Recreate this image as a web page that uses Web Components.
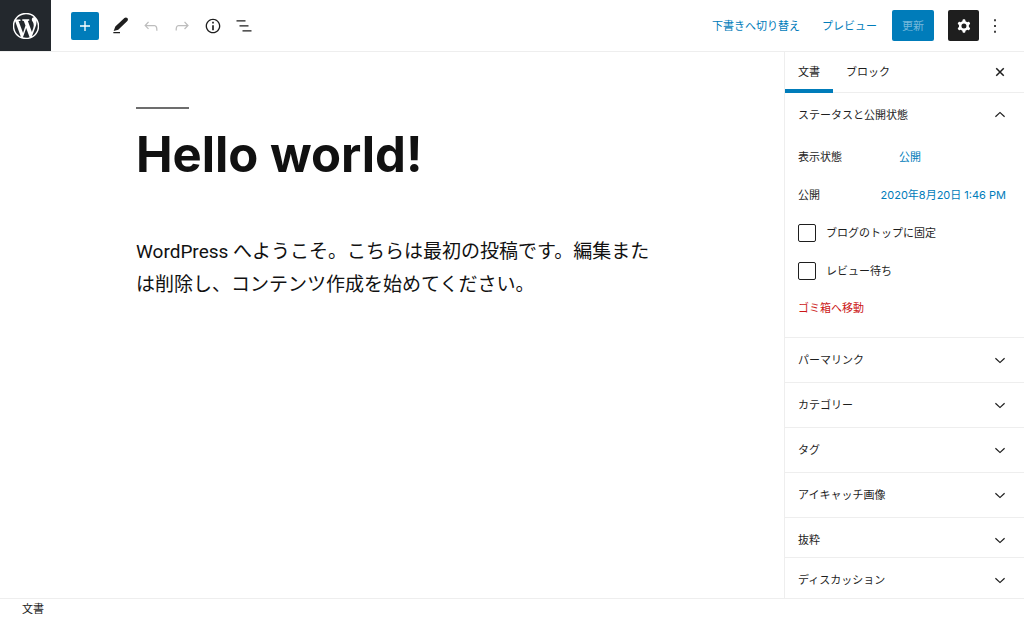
<!DOCTYPE html>
<html lang="ja">
<head>
<meta charset="utf-8">
<meta name="viewport" content="width=device-width, initial-scale=1">
<title>投稿の編集</title>
<style>
  html, body { margin: 0; height: 100%; }
  body {
    font: 11px/16px Inter, "Noto Sans CJK JP", sans-serif;
    color: #1e1e1e;
    background: #fff;
    --blue: #007cba;
    --line: #eee;
  }
</style>
</head>
<body>
<block-editor>
  <editor-header slot="header"></editor-header>
  <post-content slot="content">
    <span slot="title">Hello world!</span>
    <span slot="body">WordPress へようこそ。こちらは最初の投稿です。編集または削除し、コンテンツ作成を始めてください。</span>
  </post-content>
  <settings-sidebar slot="sidebar">
    <settings-panel label="ステータスと公開状態" open>
      <status-form></status-form>
    </settings-panel>
    <settings-panel label="パーマリンク"></settings-panel>
    <settings-panel label="カテゴリー"></settings-panel>
    <settings-panel label="タグ"></settings-panel>
    <settings-panel label="アイキャッチ画像"></settings-panel>
    <settings-panel label="抜粋" compact></settings-panel>
    <settings-panel label="ディスカッション" compact></settings-panel>
  </settings-sidebar>
  <span slot="footer">文書</span>
</block-editor>

<script>
const RESET = `
  *, *::before, *::after { box-sizing: border-box; }
  button { font: inherit; color: inherit; background: none; border: 0; padding: 0; margin: 0; cursor: pointer; }
  a { color: inherit; text-decoration: none; }
`;

function define(name, html, setup) {
  const template = document.createElement('template');
  template.innerHTML = html;
  customElements.define(name, class extends HTMLElement {
    connectedCallback() {
      if (this.shadowRoot) return;
      this.attachShadow({ mode: 'open' }).append(template.content.cloneNode(true));
      if (setup) setup(this, this.shadowRoot);
    }
  });
}

const ICONS = {
  plus: '<path d="M18 11.2h-5.2V6h-1.6v5.2H6v1.6h5.2V18h1.6v-5.2H18z"/>',
  edit: '<path d="M20.8 2.400c-1-1-2.500-1-3.500 0L6.400 12.700l-2 5.200 5.500-1.500L20.800 5.900c1-1 1-2.500 0-3.500zM4 20.800h8v-1.600H4v1.600z"/>',
  undo: '<path d="M18.3 11.7c-.6-.6-1.4-.9-2.3-.9H6.7l2.9-3.3-1.1-1-4.5 5L8.5 16l1-1-2.7-2.7H16c.5 0 .9.2 1.3.5 1 1 1 3.4 1 4.500v.3h1.5v-.2c0-1.500 0-4.300-1.500-5.700z"/>',
  redo: '<path d="M15.600 6.500l-1.100 1 2.900 3.300H8c-.9 0-1.700.3-2.300.9-1.400 1.500-1.400 4.200-1.400 5.600v.2h1.500v-.3c0-1.100 0-3.500 1-4.500.3-.3.7-.5 1.300-.5h9.200L14.500 15l1.100 1.100 4.600-4.600-4.600-5z"/>',
  info: '<path d="M12 3.200c-4.800 0-8.800 3.900-8.800 8.800 0 4.800 3.900 8.800 8.800 8.800 4.800 0 8.800-3.900 8.800-8.800 0-4.800-4-8.800-8.800-8.800zm0 16c-4 0-7.200-3.300-7.200-7.200C4.800 8 8 4.800 12 4.800s7.200 3.300 7.200 7.200c0 4-3.200 7.200-7.200 7.200zM11 17h2v-6h-2v6zm0-8h2V7h-2v2z"/>',
  outline: '<path d="M13.800 5.200H3v1.500h10.800V5.200zm-3.600 12v1.500H21v-1.500H10.200zm7.200-6H6.600v1.500h10.800v-1.500z"/>',
  cog: '<path fill-rule="evenodd" d="M10.289 4.836A1 1 0 0111.275 4h1.306a1 1 0 01.987.836l.244 1.466c.787.26 1.503.679 2.108 1.218l1.393-.522a1 1 0 011.216.437l.653 1.130a1 1 0 01-.23 1.273l-1.148.944a6.025 6.025 0 010 2.435l1.149.946a1 1 0 01.23 1.272l-.653 1.130a1 1 0 01-1.216.437l-1.394-.522c-.605.54-1.320.958-2.108 1.218l-.244 1.466a1 1 0 01-.987.836h-1.306a1 1 0 01-.986-.836l-.244-1.466a5.995 5.995 0 01-2.108-1.218l-1.394.522a1 1 0 01-1.217-.436l-.653-1.131a1 1 0 01.23-1.272l1.149-.946a6.026 6.026 0 010-2.435l-1.148-.944a1 1 0 01-.23-1.272l.653-1.131a1 1 0 011.217-.437l1.393.522a5.994 5.994 0 012.108-1.218l.244-1.466zM14.929 12a3 3 0 11-6 0 3 3 0 016 0z"/>',
  more: '<path d="M13 20h-2v-2.400h2V20zm0-6.800h-2v-2.400h2v2.400zm0-6.800h-2V4h2v2.400z"/>',
  close: '<path d="M7.500 7.500l9 9m0-9l-9 9" fill="none" stroke="currentColor" stroke-width="1.800"/>',
  down: '<path d="M17 9.400L12 14 7 9.400l-1 1.200 6 5.400 6-5.400z"/>',
  up: '<path d="M12 8l-6 5.400 1 1.200 5-4.600 5 4.600 1-1.200z"/>',
  wordpress: '<path transform="translate(-.2 -.2) scale(1.220)" d="M20 10c0-5.510-4.490-10-10-10C4.480 0 0 4.490 0 10c0 5.520 4.480 10 10 10 5.510 0 10-4.480 10-10zM7.780 15.370L4.370 6.220c.55-.02 1.170-.08 1.170-.08.5-.06.44-1.130-.06-1.110 0 0-1.450.11-2.370.11-.18 0-.37 0-.58-.01C4.120 2.690 6.870 1.110 10 1.110c2.330 0 4.450.87 6.050 2.340-.68-.11-1.650.39-1.650 1.580 0 .74.45 1.360.9 2.100.35.61.55 1.360.55 2.460 0 1.490-1.400 5-1.400 5l-3.030-8.370c.54-.02.82-.17.82-.17.5-.05.44-1.250-.06-1.220 0 0-1.440.12-2.380.12-.87 0-2.330-.12-2.330-.12-.5-.03-.56 1.200-.06 1.220l.92.08 1.260 3.410zM17.410 10c.24-.64.74-1.870.43-4.250.7 1.290 1.050 2.710 1.050 4.250 0 3.290-1.730 6.240-4.400 7.780.97-2.590 1.940-5.200 2.920-7.780zM6.100 18.090C3.120 16.650 1.110 13.530 1.110 10c0-1.300.23-2.480.72-3.590C3.250 10.300 4.670 14.200 6.100 18.090zm4.030-6.630l2.580 6.980c-.86.29-1.760.45-2.710.45-.79 0-1.570-.11-2.290-.33.81-2.380 1.620-4.740 2.420-7.100z"/>'
};

define('ui-icon', `
  <style>
    :host { display: inline-flex; flex: none; width: var(--icon-size, 20px); height: var(--icon-size, 20px); }
    svg { display: block; width: 100%; height: 100%; fill: currentColor; }
  </style>
  <svg viewBox="0 0 24 24" aria-hidden="true"></svg>
`, (host, root) => {
  root.querySelector('svg').innerHTML = ICONS[host.getAttribute('name')];
});

define('block-editor', `
  <style>
    ${RESET}
    :host { display: grid; grid-template-rows: auto 1fr auto; min-height: 100vh; }
    .main { display: grid; grid-template-columns: minmax(0, 1fr) 240px; }
    footer { border-top: 1px solid var(--line); padding: 2px 22px; }
  </style>
  <slot name="header"></slot>
  <div class="main">
    <slot name="content"></slot>
    <slot name="sidebar"></slot>
  </div>
  <footer><slot name="footer"></slot></footer>
`);

define('editor-header', `
  <style>
    ${RESET}
    :host { display: block; }
    header { display: flex; align-items: stretch; justify-content: space-between; border-bottom: 1px solid var(--line); }
    .group { display: flex; align-items: center; }
    .logo {
      display: flex; align-items: center; justify-content: center;
      width: 51px; height: 51px; margin-right: 20px;
      background: #23282d; color: #fff; --icon-size: 26px;
    }
    .icon { display: flex; align-items: center; justify-content: center; width: 31px; height: 31px; }
    .icon:disabled { color: #bdbdbd; cursor: default; }
    .add { width: 28px; height: 28px; margin-right: 5px; border-radius: 2px; background: var(--blue); color: #fff; }
    .actions { padding-right: 14px; }
    .link { color: var(--blue); margin-right: 22px; }
    .preview { margin-right: 15px; }
    .update { height: 31px; padding: 0 10px; margin-right: 14px; border-radius: 2px; background: var(--blue); color: #75b8da; }
    .cog { border-radius: 2px; background: #1e1e1e; color: #fff; }
  </style>
  <header>
    <div class="group">
      <a class="logo" href="#" aria-label="投稿一覧"><ui-icon name="wordpress"></ui-icon></a>
      <button class="icon add" aria-label="ブロックを追加"><ui-icon name="plus"></ui-icon></button>
      <button class="icon" aria-label="編集"><ui-icon name="edit"></ui-icon></button>
      <button class="icon" aria-label="取り消し" disabled><ui-icon name="undo"></ui-icon></button>
      <button class="icon" aria-label="やり直し" disabled><ui-icon name="redo"></ui-icon></button>
      <button class="icon" aria-label="コンテンツ構造"><ui-icon name="info"></ui-icon></button>
      <button class="icon" aria-label="ブロックナビゲーション"><ui-icon name="outline"></ui-icon></button>
    </div>
    <div class="group actions">
      <button class="link">下書きへ切り替え</button>
      <button class="link preview">プレビュー</button>
      <button class="update" disabled>更新</button>
      <button class="icon cog" aria-label="設定"><ui-icon name="cog"></ui-icon></button>
      <button class="icon" aria-label="オプション"><ui-icon name="more"></ui-icon></button>
    </div>
  </header>
`);

define('post-content', `
  <style>
    ${RESET}
    :host { display: block; padding: 55px 24px; color: #111; }
    article { max-width: 512px; margin: 0 auto; }
    article::before { content: ""; display: block; width: 53px; height: 2px; background: #6d6d6d; }
    h1 { margin: 16px 0 0; font-size: 49px; line-height: 60px; font-weight: 700; white-space: nowrap; }
    p { margin: 50px -8px 0 0; font: 19px/33px Roboto, "Noto Sans CJK JP", sans-serif; }
  </style>
  <article>
    <h1><slot name="title"></slot></h1>
    <p><slot name="body"></slot></p>
  </article>
`);

define('settings-sidebar', `
  <style>
    ${RESET}
    :host { display: block; border-left: 1px solid var(--line); }
    .tabs { display: flex; height: 41px; border-bottom: 1px solid var(--line); }
    .tab { height: 41px; padding: 2px 13px 0; border-bottom: 4px solid transparent; }
    .tab[aria-selected="true"] { border-bottom-color: var(--blue); }
    .close { display: flex; align-items: center; margin-left: auto; margin-right: 14px; }
  </style>
  <div class="tabs" role="tablist">
    <button class="tab" role="tab" aria-selected="true">文書</button>
    <button class="tab" role="tab" aria-selected="false">ブロック</button>
    <button class="close" aria-label="設定を閉じる"><ui-icon name="close"></ui-icon></button>
  </div>
  <slot></slot>
`);

define('settings-panel', `
  <style>
    ${RESET}
    :host { display: block; border-bottom: 1px solid var(--line); }
    :host([compact]:last-child) { border-bottom: 0; }
    button { display: flex; align-items: center; justify-content: space-between; width: 100%; padding: 12px 14px 12px 13px; text-align: left; }
    :host([compact]) button { padding-bottom: 7px; }
    h2 { margin: 0; font: inherit; }
  </style>
  <h2><button><span></span><ui-icon></ui-icon></button></h2>
  <slot></slot>
`, (host, root) => {
  const open = host.hasAttribute('open');
  root.querySelector('span').textContent = host.getAttribute('label');
  root.querySelector('button').setAttribute('aria-expanded', open);
  const icon = document.createElement('ui-icon');
  icon.setAttribute('name', open ? 'up' : 'down');
  root.querySelector('ui-icon').replaceWith(icon);
});

define('status-form', `
  <style>
    ${RESET}
    :host { display: block; padding: 1px 18px 11px 13px; }
    .row { display: flex; align-items: center; height: 38px; }
    .row > span { flex: 1; }
    .link { color: var(--blue); }
    .visibility { flex: none; width: 107px; text-align: left; }
    input {
      appearance: none; width: 18px; height: 18px; margin: 0 10px 0 0;
      border: 1px solid #1e1e1e; border-radius: 2px; background: #fff;
    }
    .trash { display: block; padding: 10px 0; color: #cc1818; }
  </style>
  <div class="row"><span>表示状態</span><button class="link visibility">公開</button></div>
  <div class="row"><span>公開</span><button class="link">2020年8月20日 1:46 PM</button></div>
  <div class="row"><input type="checkbox" id="sticky"><label for="sticky">ブログのトップに固定</label></div>
  <div class="row"><input type="checkbox" id="pending"><label for="pending">レビュー待ち</label></div>
  <button class="trash">ゴミ箱へ移動</button>
`);
</script>
</body>
</html>
